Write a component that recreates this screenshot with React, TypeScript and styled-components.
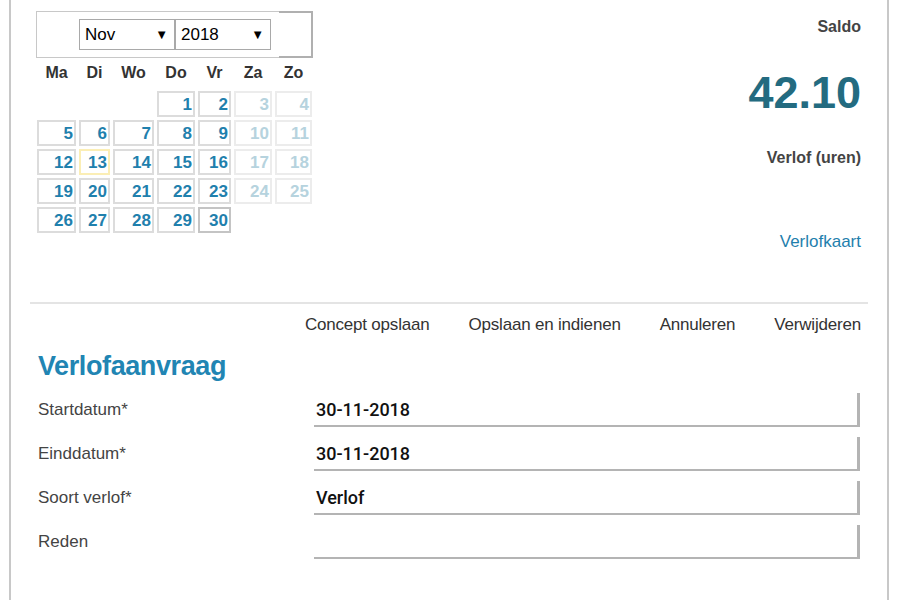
import styled, { createGlobalStyle } from 'styled-components';

const GlobalStyle = createGlobalStyle`
  body {
    margin: 0;
    background: #fff;
    font-family: 'Liberation Sans', Arial, sans-serif;
  }
`;

type DayKind = 'normal' | 'weekend' | 'today' | 'selected';

interface Day {
  date: number;
  kind: DayKind;
}

const weekDays = ['Ma', 'Di', 'Wo', 'Do', 'Vr', 'Za', 'Zo'];

// November 2018 starts on a Thursday
const buildMonth = (): (Day | null)[] => {
  const cells: (Day | null)[] = [null, null, null];
  for (let d = 1; d <= 30; d++) {
    const col = cells.length % 7;
    let kind: DayKind = col >= 5 ? 'weekend' : 'normal';
    if (d === 13) kind = 'today';
    if (d === 30) kind = 'selected';
    cells.push({ date: d, kind });
  }
  return cells;
};

const borderFor: Record<DayKind, string> = {
  normal: '#dcdcdc',
  weekend: '#ececec',
  today: '#fbeeb5',
  selected: '#c4c4c4',
};

const fields = [
  { label: 'Startdatum*', value: '30-11-2018' },
  { label: 'Einddatum*', value: '30-11-2018' },
  { label: 'Soort verlof*', value: 'Verlof' },
  { label: 'Reden', value: '' },
];

const actions = ['Concept opslaan', 'Opslaan en indienen', 'Annuleren', 'Verwijderen'];

export default function App() {
  const days = buildMonth();

  return (
    <>
      <GlobalStyle />
      <Panel>
        <TopSection>
          <Calendar>
            <CalendarHead>
              <MonthBar>
                <FakeSelect>
                  Nov<Arrow>▼</Arrow>
                </FakeSelect>
                <FakeSelect>
                  2018<Arrow>▼</Arrow>
                </FakeSelect>
              </MonthBar>
              <NextSlot />
            </CalendarHead>
            <DayGrid>
              {weekDays.map((w) => (
                <WeekDay key={w}>{w}</WeekDay>
              ))}
              {days.map((day, i) =>
                day ? (
                  <DayCell key={i} $kind={day.kind}>
                    {day.date}
                  </DayCell>
                ) : (
                  <span key={i} />
                ),
              )}
            </DayGrid>
          </Calendar>
          <Balance>
            <BalanceTitle>Saldo</BalanceTitle>
            <BalanceValue>42.10</BalanceValue>
            <BalanceTitle $gap={30}>Verlof (uren)</BalanceTitle>
            <CardLink href="#">Verlofkaart</CardLink>
          </Balance>
        </TopSection>

        <Divider />

        <Actions>
          {actions.map((a) => (
            <ActionButton key={a}>{a}</ActionButton>
          ))}
        </Actions>

        <Heading>Verlofaanvraag</Heading>

        <Form>
          {fields.map((f) => (
            <FieldRow key={f.label}>
              <FieldLabel>{f.label}</FieldLabel>
              <FieldInput>{f.value}</FieldInput>
            </FieldRow>
          ))}
        </Form>
      </Panel>
    </>
  );
}

const Panel = styled.div`
  margin-left: 9px;
  width: 876px;
  min-height: 600px;
  border-left: 2px solid #c8c8c8;
  border-right: 2px solid #c8c8c8;
`;

const TopSection = styled.div`
  display: flex;
  justify-content: space-between;
  align-items: flex-start;
  padding: 0 26px 0 25px;
`;

const Calendar = styled.div`
  margin-top: 11px;
`;

const CalendarHead = styled.div`
  display: flex;
  width: 277px;
`;

const MonthBar = styled.div`
  box-sizing: border-box;
  width: 243px;
  height: 47px;
  display: flex;
  align-items: center;
  padding-left: 42px;
  border: 1px solid #c8c8c8;
  border-right: none;
`;

const NextSlot = styled.div`
  box-sizing: border-box;
  width: 34px;
  height: 47px;
  border: 2px solid #b0b0b0;
  border-left: none;
`;

const FakeSelect = styled.div`
  box-sizing: border-box;
  width: 96px;
  height: 31px;
  display: flex;
  align-items: center;
  justify-content: space-between;
  padding: 0 6px 0 5px;
  border: 1px solid #a9a9a9;
  font-size: 17px;
  color: #000;
`;

const Arrow = styled.span`
  font-size: 13px;
  line-height: 1;
`;

const DayGrid = styled.div`
  display: grid;
  grid-template-columns: 39px 31px 41px 38px 33px 38px 37px;
  grid-auto-rows: 26px;
  grid-template-rows: 25px;
  gap: 3px;
  margin: 5px 0 0 1px;
`;

const WeekDay = styled.div`
  text-align: center;
  font-size: 16px;
  font-weight: bold;
  line-height: 20px;
  color: #333;
`;

const DayCell = styled.div<{ $kind: DayKind }>`
  box-sizing: border-box;
  border: 2px solid ${(p) => borderFor[p.$kind]};
  padding-right: 1px;
  text-align: right;
  font-size: 17px;
  font-weight: bold;
  line-height: 23px;
  color: ${(p) => (p.$kind === 'weekend' ? '#b6d3de' : '#1f80ad')};
`;

const Balance = styled.div`
  display: flex;
  flex-direction: column;
  align-items: flex-end;
  padding-top: 17px;
`;

const BalanceTitle = styled.div<{ $gap?: number }>`
  margin-top: ${(p) => p.$gap ?? 0}px;
  font-size: 16px;
  font-weight: bold;
  line-height: 20px;
  color: #444;
`;

const BalanceValue = styled.div`
  margin-top: 31px;
  font-size: 45px;
  font-weight: bold;
  line-height: 50px;
  color: #236b80;
`;

const CardLink = styled.a`
  margin-top: 64px;
  font-size: 17px;
  line-height: 20px;
  color: #1f80ad;
  text-decoration: none;
`;

const Divider = styled.hr`
  margin: 50px 19px 0;
  border: none;
  border-top: 2px solid #e4e4e4;
`;

const Actions = styled.div`
  display: flex;
  justify-content: flex-end;
  gap: 39px;
  margin-top: 11px;
  padding-right: 26px;
`;

const ActionButton = styled.button`
  padding: 0;
  border: none;
  background: none;
  font-family: inherit;
  font-size: 17px;
  line-height: 20px;
  letter-spacing: -0.2px;
  color: #333;
  cursor: pointer;
`;

const Heading = styled.h2`
  margin: 15px 0 0 27px;
  font-size: 27px;
  font-weight: bold;
  line-height: 32px;
  letter-spacing: -0.4px;
  color: #2185b3;
`;

const Form = styled.div`
  display: flex;
  flex-direction: column;
  gap: 10px;
  margin-top: 11px;
  padding-left: 27px;
`;

const FieldRow = styled.div`
  display: grid;
  grid-template-columns: 276px 546px;
  align-items: center;
`;

const FieldLabel = styled.div`
  font-size: 17px;
  color: #444;
`;

const FieldInput = styled.div`
  box-sizing: border-box;
  height: 34px;
  display: flex;
  align-items: center;
  padding-left: 2px;
  border-bottom: 2px solid #b4b4b4;
  border-right: 3px solid #b4b4b4;
  font-family: Roboto, 'Liberation Sans', sans-serif;
  font-size: 18px;
  font-weight: 500;
  color: #111;
`;
